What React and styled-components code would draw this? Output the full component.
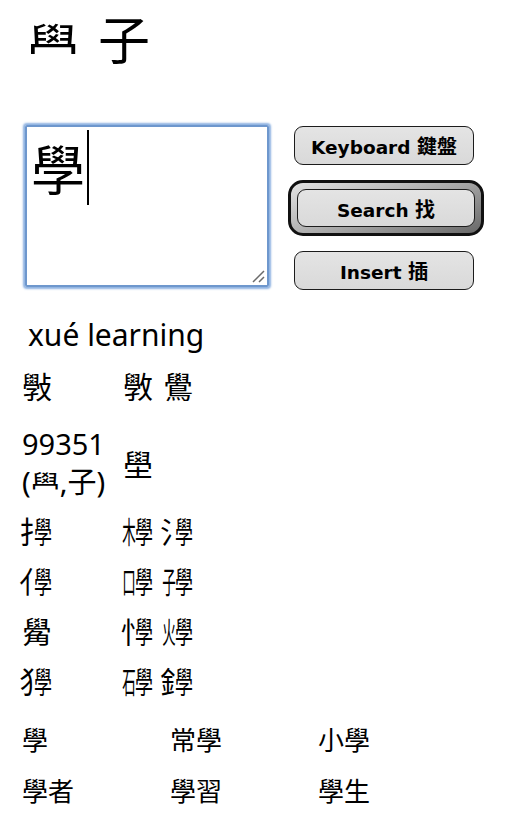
import React from "react";
import styled, { createGlobalStyle } from "styled-components";

const GlobalStyle = createGlobalStyle`
  html, body {
    margin: 0;
    padding: 0;
    background: #fff;
  }
  body {
    font-family: "Noto Sans", "Noto Sans CJK TC", sans-serif;
    color: #000;
  }
`;

const Page = styled.div`
  width: 506px;
  min-height: 816px;
  box-sizing: border-box;
  padding: 8px 0 0 22px;
`;

const Title = styled.h1`
  display: flex;
  gap: 19px;
  margin: 0 0 0 5px;
  font-family: "Noto Sans CJK TC", sans-serif;
  font-size: 52px;
  font-weight: 400;
  line-height: 60px;
`;

const Editor = styled.div`
  display: flex;
  align-items: flex-start;
  margin-top: 57px;
`;

const InputBox = styled.div`
  position: relative;
  width: 244px;
  height: 162px;
  margin-left: 3px;
  box-sizing: border-box;
  padding: 3px 4px;
  border: 2px solid #6e97cd;
  border-radius: 2px;
  box-shadow: 0 0 2px 2px rgba(130, 170, 222, 0.9);
  display: flex;
  align-items: flex-start;
  font-family: "Noto Sans CJK TC", sans-serif;
  font-size: 54px;
  line-height: 75px;
`;

const Caret = styled.span`
  display: inline-block;
  width: 2px;
  height: 75px;
  margin-left: 2px;
  background: #000;
`;

const Grip = styled.svg`
  position: absolute;
  right: 2px;
  bottom: 2px;
`;

const Buttons = styled.div`
  display: flex;
  flex-direction: column;
  align-items: flex-start;
  gap: 15px;
  margin-left: 19px;
  padding: 1px 0 0 6px;
`;

const Button = styled.button`
  width: 180px;
  height: 39px;
  box-sizing: border-box;
  padding: 0;
  border: 1.5px solid #1c1c1c;
  border-radius: 9px;
  background: linear-gradient(#e4e4e4, #d9d9d9);
  color: #000;
  font-family: "DejaVu Sans", "Noto Sans CJK TC", sans-serif;
  font-weight: 700;
  font-size: 18.5px;
  cursor: pointer;
`;

const DefaultFrame = styled.div`
  margin-left: -6px;
  padding: 6px;
  border: 3px solid #111;
  border-radius: 15px;
  background: linear-gradient(160deg, #e4e4e4 0%, #a4a4a4 55%, #686868 100%);
  ${Button} {
    width: 178px;
    height: 38px;
  }
`;

const Han = styled.span`
  font-family: "Noto Sans CJK TC", sans-serif;
  font-size: 20px;
`;

const Pinyin = styled.div`
  margin: 27px 0 0 6px;
  font-size: 30px;
  line-height: 36px;
`;

const CharTable = styled.div`
  margin-top: 7px;
  font-family: "Noto Sans CJK TC", sans-serif;
  font-size: 30px;
`;

const CharRow = styled.div`
  display: grid;
  grid-template-columns: 101px auto;
  align-items: center;
  height: ${(p) => (p.$tall ? 84 : 50)}px;
  margin-top: ${(p) => (p.$tall ? 11 : 0)}px;
`;

const Group = styled.div`
  display: flex;
  gap: 10px;
`;

const Code = styled.div`
  font-family: "Noto Sans", "Noto Sans CJK TC", sans-serif;
  font-size: 29px;
  line-height: 38px;
`;

// a side radical squeezed next to 學, for characters the fonts lack
const Compound = styled.span`
  display: inline-flex;
  width: 1em;
  line-height: 1.2;
`;

const Part = styled.span`
  display: flex;
  justify-content: center;
  width: ${(p) => p.$w}em;
  transform: translateX(${(p) => p.$dx || 0}em) scaleX(${(p) => p.$s});
  white-space: nowrap;
`;

const Words = styled.div`
  display: grid;
  grid-template-columns: repeat(3, 148px);
  grid-auto-rows: 51px;
  align-items: center;
  margin-top: 8px;
  font-family: "Noto Sans CJK TC", sans-serif;
  font-size: 26px;
`;

const NARROW = "扌亻氵忄犭釒";

const Glyph = ({ c }) => {
  if (c.length === 1) return <span>{c}</span>;
  const side = c[0];
  const narrow = NARROW.includes(side);
  return (
    <Compound>
      <Part $w={0.4} $s={narrow ? 0.9 : 0.45} $dx={narrow ? 0.16 : 0}>
        {side}
      </Part>
      <Part $w={0.6} $s={0.6}>
        學
      </Part>
    </Compound>
  );
};

const rows = [
  ["扌學", ["木學", "氵學"]],
  ["亻學", ["口學", "子學"]],
  ["觷", ["忄學", "火學"]],
  ["犭學", ["石學", "釒學"]],
];

const words = ["學", "常學", "小學", "學者", "學習", "學生"];

export default function App() {
  return (
    <Page>
      <GlobalStyle />
      <Title>
        <span>𦥯</span>
        <span>子</span>
      </Title>

      <Editor>
        <InputBox>
          <span>學</span>
          <Caret />
          <Grip width="14" height="14" viewBox="0 0 14 14">
            <path d="M13 2 L2 13 M13 8 L8 13" stroke="#6a6a6a" strokeWidth="1.5" />
          </Grip>
        </InputBox>
        <Buttons>
          <Button>
            Keyboard <Han>鍵盤</Han>
          </Button>
          <DefaultFrame>
            <Button>
              Search <Han>找</Han>
            </Button>
          </DefaultFrame>
          <Button>
            Insert <Han>插</Han>
          </Button>
        </Buttons>
      </Editor>

      <Pinyin>xué learning</Pinyin>

      <CharTable>
        <CharRow>
          <span>斅</span>
          <Group>
            <span>斆</span>
            <span>鷽</span>
          </Group>
        </CharRow>
        <CharRow $tall>
          <Code>
            99351
            <br />
            (𦥯,子)
          </Code>
          <span>壆</span>
        </CharRow>
        {rows.map(([first, rest]) => (
          <CharRow key={first}>
            <Glyph c={first} />
            <Group>
              {rest.map((c) => (
                <Glyph key={c} c={c} />
              ))}
            </Group>
          </CharRow>
        ))}
      </CharTable>

      <Words>
        {words.map((w) => (
          <span key={w}>{w}</span>
        ))}
      </Words>
    </Page>
  );
}
